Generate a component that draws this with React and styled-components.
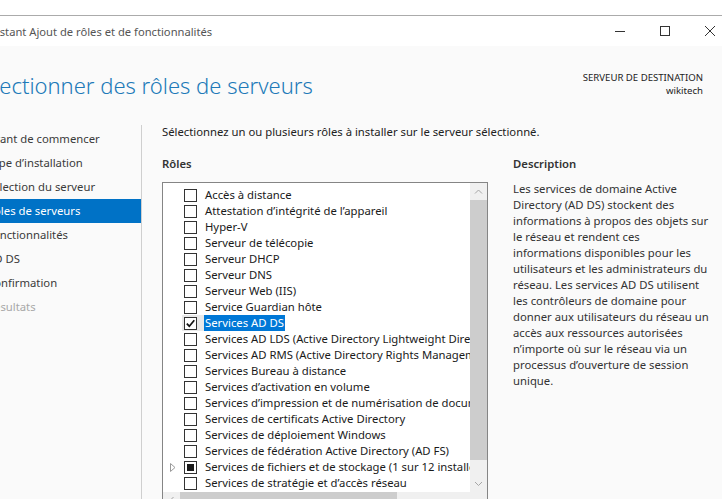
import React from "react";
import styled, { createGlobalStyle } from "styled-components";

const Global = createGlobalStyle`
  html, body { margin: 0; padding: 0; background: #fff; }
  body { width: 722px; height: 499px; overflow: hidden; font-family: "Noto Sans", "Open Sans", sans-serif; }
  #root { width: 722px; height: 499px; overflow: hidden; }
`;

const Desktop = styled.div`
  width: 722px;
  height: 499px;
  overflow: hidden;
  background: #fff;
  display: flex;
  flex-direction: column;
`;

const TopStrip = styled.div`
  height: 15px;
  flex: none;
  background: #fff;
  border-bottom: 1px solid #ababab;
`;

const Window = styled.div`
  margin-left: -40px;
  width: 772px;
  flex: 1;
  min-height: 0;
  display: flex;
  flex-direction: column;
`;

const TitleBar = styled.div`
  height: 30px;
  flex: none;
  display: flex;
  align-items: center;
  background: #fff;
`;

const Title = styled.div`
  flex: 1;
  padding-left: 19px;
  font-size: 11.2px;
  color: #555;
  white-space: nowrap;
`;

const CtrlButton = styled.div`
  width: 45px;
  height: 30px;
  flex: none;
  display: flex;
  align-items: center;
  justify-content: center;
`;

const Body = styled.div`
  flex: 1;
  min-height: 0;
  background: #fafafa;
  display: flex;
  flex-direction: column;
`;

const Header = styled.div`
  height: 76px;
  flex: none;
  box-sizing: border-box;
  padding: 25px 29px 0 10px;
  display: flex;
  justify-content: space-between;
  align-items: flex-start;
`;

const Heading = styled.h1`
  margin: 0;
  font-size: 22px;
  font-weight: 300;
  line-height: 28px;
  color: #2079b8;
  white-space: nowrap;
`;

const ServerInfo = styled.div`
  text-align: right;
  font-size: 9.6px;
  line-height: 13px;
  color: #222;
  white-space: nowrap;
`;

const Main = styled.div`
  flex: 1;
  min-height: 0;
  display: flex;
`;

const Nav = styled.nav`
  width: 182px;
  flex: none;
  box-sizing: border-box;
  margin-top: 3px;
  padding-top: 2px;
  border-right: 1px solid #cfcfcf;
`;

const NavItem = styled.div`
  height: 24px;
  line-height: 24px;
  padding-left: 27px;
  font-size: 11.3px;
  white-space: nowrap;
  color: ${(p) => (p.$active ? "#fff" : p.$disabled ? "#a8a8a8" : "#3a3a3a")};
  background: ${(p) => (p.$active ? "#0072c6" : "transparent")};
`;

const Content = styled.div`
  flex: 1;
  min-width: 0;
  padding-left: 20px;
  padding-top: 2px;
  display: flex;
  flex-direction: column;
`;

const Intro = styled.div`
  font-size: 11.3px;
  line-height: 16px;
  color: #222;
  white-space: nowrap;
`;

const Columns = styled.div`
  margin-top: 16px;
  display: flex;
  gap: 25px;
`;

const RolesCol = styled.div`
  width: 326px;
  flex: none;
`;

const SectionLabel = styled.div`
  font-size: 11.3px;
  font-weight: 600;
  line-height: 16px;
  color: #333;
`;

const ListBox = styled.div`
  margin-top: 10px;
  height: 328px;
  box-sizing: border-box;
  border: 1px solid #858585;
  background: #fff;
  display: grid;
  grid-template-columns: 1fr 17px;
  grid-template-rows: 1fr 17px;
`;

const Rows = styled.div`
  overflow: hidden;
  padding-top: 4px;
  min-width: 0;
`;

const Row = styled.div`
  height: 16px;
  display: flex;
  align-items: center;
  white-space: nowrap;
`;

const Expander = styled.div`
  width: 19px;
  height: 16px;
  flex: none;
  display: flex;
  align-items: center;
  justify-content: center;
`;

const CheckCell = styled.div`
  width: 22px;
  height: 16px;
  flex: none;
  box-sizing: border-box;
  padding-left: 2px;
  display: flex;
  align-items: center;
  background: ${(p) => (p.$selected ? "#e9e9e9" : "transparent")};
`;

const Box = styled.div`
  width: 13px;
  height: 13px;
  box-sizing: border-box;
  border: 1px solid #333;
  background: #fff;
  display: flex;
  align-items: center;
  justify-content: center;
`;

const PartialMark = styled.div`
  width: 7px;
  height: 7px;
  background: #1a1a1a;
`;

const Label = styled.span`
  padding: 0 1px;
  font-size: 11.3px;
  line-height: 16px;
  color: ${(p) => (p.$selected ? "#fff" : "#1a1a1a")};
  background: ${(p) => (p.$selected ? "#0078d7" : "transparent")};
`;

const VScroll = styled.div`
  background: #f0f0f0;
  display: flex;
  flex-direction: column;
`;

const HScroll = styled.div`
  background: #f0f0f0;
  display: flex;
`;

const Corner = styled.div`
  background: #f0f0f0;
`;

const ArrowBtn = styled.div`
  width: 17px;
  height: 17px;
  flex: none;
  display: flex;
  align-items: center;
  justify-content: center;
`;

const Spacer = styled.div`
  flex: 1;
`;

const Thumb = styled.div`
  flex: none;
  background: #cdcdcd;
  width: ${(p) => (p.$horizontal ? `${p.$size}px` : "auto")};
  height: ${(p) => (p.$horizontal ? "auto" : `${p.$size}px`)};
`;

const DescCol = styled.div`
  width: 210px;
  flex: none;
`;

const DescText = styled.div`
  margin-top: 9px;
  font-size: 11.3px;
  line-height: 16px;
  color: #333;
  white-space: nowrap;
`;

const DescLine = styled.div``;

const navItems = [
  { label: "Avant de commencer" },
  { label: "Type d’installation" },
  { label: "Sélection du serveur" },
  { label: "Rôles de serveurs", active: true },
  { label: "Fonctionnalités" },
  { label: "AD DS" },
  { label: "Confirmation" },
  { label: "Résultats", disabled: true },
];

const roles = [
  { label: "Accès à distance" },
  { label: "Attestation d’intégrité de l’appareil" },
  { label: "Hyper-V" },
  { label: "Serveur de télécopie" },
  { label: "Serveur DHCP" },
  { label: "Serveur DNS" },
  { label: "Serveur Web (IIS)" },
  { label: "Service Guardian hôte" },
  { label: "Services AD DS", checked: true, selected: true },
  { label: "Services AD LDS (Active Directory Lightweight Directory Services)" },
  { label: "Services AD RMS (Active Directory Rights Management Services)" },
  { label: "Services Bureau à distance" },
  { label: "Services d’activation en volume" },
  { label: "Services d’impression et de numérisation de documents" },
  { label: "Services de certificats Active Directory" },
  { label: "Services de déploiement Windows" },
  { label: "Services de fédération Active Directory (AD FS)" },
  { label: "Services de fichiers et de stockage (1 sur 12 installé(s))", partial: true, expandable: true },
  { label: "Services de stratégie et d’accès réseau" },
  { label: "Services WSUS (Windows Server Update Services)" },
];

const description = [
  "Les services de domaine Active",
  "Directory (AD DS) stockent des",
  "informations à propos des objets sur",
  "le réseau et rendent ces",
  "informations disponibles pour les",
  "utilisateurs et les administrateurs du",
  "réseau. Les services AD DS utilisent",
  "les contrôleurs de domaine pour",
  "donner aux utilisateurs du réseau un",
  "accès aux ressources autorisées",
  "n’importe où sur le réseau via un",
  "processus d’ouverture de session",
  "unique.",
];

const Chevron = ({ dir }) => {
  const pts = {
    up: "1,5.5 4.5,2 8,5.5",
    down: "1,2 4.5,5.5 8,2",
    left: "5.5,1 2,4.5 5.5,8",
  }[dir];
  const w = dir === "left" ? 7 : 9;
  const h = dir === "left" ? 9 : 7;
  return (
    <svg width={w} height={h} viewBox={`0 0 ${w} ${h}`}>
      <polyline points={pts} fill="none" stroke="#a6a6a6" strokeWidth="1" />
    </svg>
  );
};

const CheckMark = () => (
  <svg width="11" height="11" viewBox="0 0 11 11">
    <path d="M1.8 5.6 L4.3 8.2 L9.3 2.2" fill="none" stroke="#111" strokeWidth="1.7" />
  </svg>
);

const Triangle = () => (
  <svg width="6" height="9" viewBox="0 0 6 9">
    <polygon points="0.5,0.5 5,4.5 0.5,8.5" fill="none" stroke="#9a9a9a" strokeWidth="1" />
  </svg>
);

export default function App() {
  return (
    <>
      <Global />
      <Desktop>
        <TopStrip />
        <Window>
          <TitleBar>
            <Title>Assistant Ajout de rôles et de fonctionnalités</Title>
            <CtrlButton>
              <svg width="10" height="10" viewBox="0 0 10 10">
                <line x1="0" y1="5.5" x2="10" y2="5.5" stroke="#333" strokeWidth="1" />
              </svg>
            </CtrlButton>
            <CtrlButton>
              <svg width="10" height="10" viewBox="0 0 10 10">
                <rect x="0.5" y="0.5" width="9" height="9" fill="none" stroke="#333" strokeWidth="1" />
              </svg>
            </CtrlButton>
            <CtrlButton>
              <svg width="10" height="10" viewBox="0 0 10 10">
                <path d="M0 0 L10 10 M10 0 L0 10" stroke="#333" strokeWidth="1" />
              </svg>
            </CtrlButton>
          </TitleBar>
          <Body>
            <Header>
              <Heading>Sélectionner des rôles de serveurs</Heading>
              <ServerInfo>
                <div>SERVEUR DE DESTINATION</div>
                <div>wikitech</div>
              </ServerInfo>
            </Header>
            <Main>
              <Nav>
                {navItems.map((n) => (
                  <NavItem key={n.label} $active={n.active} $disabled={n.disabled}>
                    {n.label}
                  </NavItem>
                ))}
              </Nav>
              <Content>
                <Intro>Sélectionnez un ou plusieurs rôles à installer sur le serveur sélectionné.</Intro>
                <Columns>
                  <RolesCol>
                    <SectionLabel>Rôles</SectionLabel>
                    <ListBox>
                      <Rows>
                        {roles.map((r) => (
                          <Row key={r.label}>
                            <Expander>{r.expandable && <Triangle />}</Expander>
                            <CheckCell $selected={r.selected}>
                              <Box>
                                {r.checked && <CheckMark />}
                                {r.partial && <PartialMark />}
                              </Box>
                            </CheckCell>
                            <Label $selected={r.selected}>{r.label}</Label>
                          </Row>
                        ))}
                      </Rows>
                      <VScroll>
                        <ArrowBtn>
                          <Chevron dir="up" />
                        </ArrowBtn>
                        <Thumb $size={260} />
                        <Spacer />
                        <ArrowBtn>
                          <Chevron dir="down" />
                        </ArrowBtn>
                      </VScroll>
                      <HScroll>
                        <ArrowBtn>
                          <Chevron dir="left" />
                        </ArrowBtn>
                        <Thumb $horizontal $size={217} />
                        <Spacer />
                      </HScroll>
                      <Corner />
                    </ListBox>
                  </RolesCol>
                  <DescCol>
                    <SectionLabel>Description</SectionLabel>
                    <DescText>
                      {description.map((l, i) => (
                        <DescLine key={i}>{l}</DescLine>
                      ))}
                    </DescText>
                  </DescCol>
                </Columns>
              </Content>
            </Main>
          </Body>
        </Window>
      </Desktop>
    </>
  );
}
